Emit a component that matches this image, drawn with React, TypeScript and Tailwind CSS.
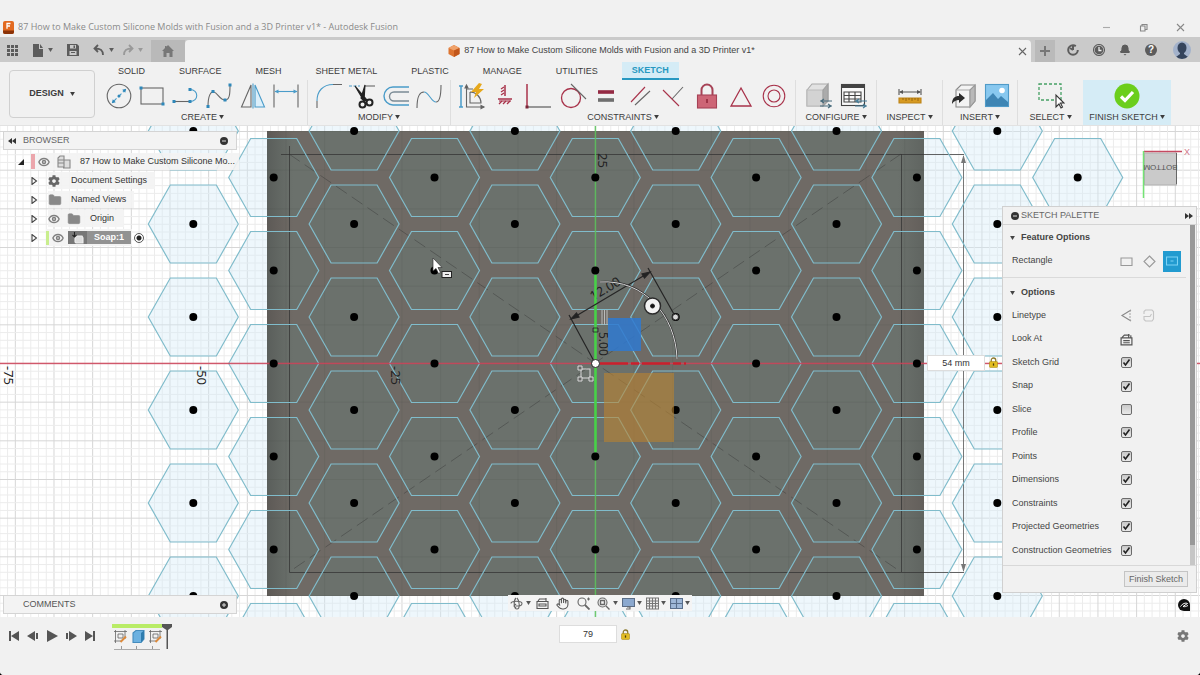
import type { ReactNode } from 'react';
import { Bell, Hand, Eye, Folder } from 'lucide-react';
import { FaCog } from 'react-icons/fa';

const ARIAL = 'font-["Liberation_Sans",Arial,sans-serif]';

const BLUE = '#4a9cc9';
const RED = '#a8324a';
const GRAY = '#666666';

interface GlyphProps {
  children: ReactNode;
  size?: string;
  box?: string;
  className?: string;
}

const Glyph = ({ children, size = 'w-7 h-7', box = '0 0 28 28', className = '' }: GlyphProps) => (
  <svg viewBox={box} className={`${size} ${className} shrink-0`} fill="none" stroke={GRAY} strokeWidth="1.1" aria-hidden="true">
    {children}
  </svg>
);

const Caret = ({ className = '' }: { className?: string }) => (
  <svg viewBox="0 0 6 5" className={`w-[5px] h-1 shrink-0 ${className}`} fill="currentColor" aria-hidden="true">
    <path d="M0 0H6L3 5Z" />
  </svg>
);

const Lock = () => (
  <svg viewBox="0 0 10 12" className="w-[9px] h-[11px] shrink-0" aria-hidden="true">
    <path d="M2.5 6V3.5a2.5 2.5 0 0 1 5 0V6" fill="none" stroke="#8c7a2e" strokeWidth="1.4" />
    <rect x="0.5" y="5" width="9" height="6.5" rx="1" fill="#e3bd22" stroke="#a48412" strokeWidth="0.6" />
    <path d="M5 7v2.5" stroke="#4b3c08" strokeWidth="1.4" />
  </svg>
);

// ---------- ribbon icons ----------

const CircleIcon = () => (
  <Glyph>
    <circle cx="14" cy="14" r="11.8" />
    <path d="M8 20 20 8" stroke={BLUE} strokeDasharray="5 2" />
    <g fill="#2f88ba" stroke="none">
      <path d="M6.800 21.200l1-4 3 3ZM21.200 6.800l-4 1 3 3Z" />
      <circle cx="14" cy="14" r="1.500" />
    </g>
  </Glyph>
);

const RectIcon = () => (
  <Glyph>
    <rect x="3" y="6" width="22" height="16" />
    <g fill="#2f88ba" stroke="none">
      <rect x="1.500" y="4.500" width="3" height="3" />
      <rect x="23.500" y="20.500" width="3" height="3" />
    </g>
  </Glyph>
);

const LineIcon = () => (
  <Glyph>
    <path d="M2 19.500H18" />
    <path d="M18 19.500c9 0 9-12 0-12" stroke={BLUE} />
    <g fill="#2f88ba" stroke="none">
      <rect x="0.500" y="18" width="3" height="3" />
      <rect x="16.500" y="18" width="3" height="3" />
      <rect x="16.500" y="6" width="3" height="3" />
    </g>
  </Glyph>
);

const SplineIcon = () => (
  <Glyph>
    <path d="M3 25C3 13 6 9 9 10c4 1 6 9 12 8 4-1 4-8 4-15" />
    <g fill="#2f88ba" stroke="none">
      <rect x="1.500" y="23" width="3" height="3" />
      <rect x="6.500" y="8" width="3" height="3" />
      <rect x="18.500" y="16.500" width="3" height="3" />
      <rect x="23.500" y="1.500" width="3" height="3" />
    </g>
  </Glyph>
);

const MirrorIcon = () => (
  <Glyph>
    <path d="M12 3V25H2.500Z" />
    <path d="M16 3V25H25.500Z" stroke={BLUE} fill="#dceffa" />
    <path d="M14 1.500V26.500" stroke={BLUE} />
  </Glyph>
);

const DimensionIcon = () => (
  <Glyph>
    <path d="M2 2.500V25.500M26 2.500V25.500" />
    <path d="M3 9.500H25" stroke={BLUE} />
    <path d="M2.500 9.500l4-2v4ZM25.500 9.500l-4-2v4Z" fill={BLUE} stroke="none" />
  </Glyph>
);

const FilletIcon = () => (
  <Glyph>
    <path d="M2 26V19M18 2.500H27" />
    <path d="M2 19C2 9 8 2.500 18 2.500" stroke={BLUE} />
  </Glyph>
);

const TrimIcon = () => (
  <Glyph>
    <path d="M1 4H12" strokeDasharray="3 1.500" stroke={BLUE} />
    <path d="M17 4H27" />
    <path d="M7 4 19 18 16 19ZM17 3 16 19 13 16Z" fill="#222" stroke="#222" />
    <circle cx="14.500" cy="22.500" r="3" stroke="#222" strokeWidth="2" />
    <circle cx="21.500" cy="20.500" r="3" stroke="#222" strokeWidth="2" />
  </Glyph>
);

const OffsetIcon = () => (
  <Glyph>
    <path d="M27 5H11a9 9 0 0 0 0 18H27" stroke={BLUE} strokeWidth="1.400" />
    <path d="M27 10H12a4.500 4.500 0 0 0 0 9H27" stroke="#7b8b95" strokeWidth="1.400" />
  </Glyph>
);

const CurveIcon = () => (
  <Glyph>
    <path d="M2 26C2 13 5 10 9 10" />
    <path d="M9 10c5 0 7 10 12 10" stroke={BLUE} />
    <path d="M21 20c4 0 5-7 5-17" />
  </Glyph>
);

const AutoConstrainIcon = () => (
  <Glyph>
    <path d="M3 4V25M1 4H5M1 25H5" stroke={BLUE} strokeWidth="1.500" />
    <path d="M8.500 3V25H26M8 7h7M12 10v11h11C23 15 18 10 12 10" />
    <path d="M21 1 13 10h5l-2 6 10-9h-5l3-5Z" fill="#e6a81d" stroke="none" />
    <path d="M23 23.500l3 1.500-3 1.500ZM7 6l1.500-3L10 6Z" fill="#555" />
  </Glyph>
);

const HorizVertIcon = () => (
  <Glyph>
    <path d="M14 3V14M7 17H21" stroke={RED} strokeWidth="1.500" />
    <path d="M10 7l3-2M10 10l3-2M10 13l3-2M8 22l3-3M12 22l3-3M16 22l3-3" stroke={RED} strokeWidth="1.300" />
    <path d="M8 19H20" stroke={RED} />
  </Glyph>
);

const CoincidentIcon = () => (
  <Glyph>
    <path d="M2 2V25" stroke={RED} strokeWidth="1.500" />
    <path d="M2 25H26" strokeWidth="1.300" />
    <rect x="0.500" y="23.500" width="3" height="3" fill="#7a2638" stroke="none" />
  </Glyph>
);

const TangentIcon = () => (
  <Glyph>
    <circle cx="12" cy="16" r="9.500" stroke={RED} strokeWidth="1.300" />
    <path d="M12 2 27 17" />
  </Glyph>
);

const EqualIcon = () => (
  <Glyph>
    <path d="M6 10H22" stroke="#942a43" strokeWidth="3.600" />
    <path d="M6 18H22" stroke="#6f6f6f" strokeWidth="3.600" />
  </Glyph>
);

const ParallelIcon = () => (
  <Glyph>
    <path d="M5 20 19 5" stroke={RED} />
    <path d="M9 23 24 9" />
  </Glyph>
);

const PerpendicularIcon = () => (
  <Glyph>
    <path d="M4 8 20 24" stroke={RED} />
    <path d="M13 17 24 5" />
  </Glyph>
);

const FixIcon = () => (
  <Glyph>
    <path d="M8.500 13V8a5.500 5.500 0 0 1 11 0v5" stroke="#a64256" strokeWidth="2" />
    <rect x="4.500" y="13" width="19" height="13" fill="#cd6576" stroke="#a64256" />
    <path d="M14 17v4" stroke="#8c2438" strokeWidth="1.500" />
  </Glyph>
);

const MidpointIcon = () => (
  <Glyph>
    <path d="M14 6 24 24H4Z" stroke={RED} strokeWidth="1.300" />
  </Glyph>
);

const ConcentricIcon = () => (
  <Glyph>
    <circle cx="14" cy="14" r="10.800" stroke={RED} />
    <circle cx="14" cy="14" r="6" stroke={RED} />
  </Glyph>
);

const ConfigureCubeIcon = () => (
  <Glyph>
    <path d="M2 8 7 2H23V19L18 24H2Z" fill="#e2e2e2" stroke="#aaa" />
    <path d="M2 8H18V24H2Z" fill="#d3d3d3" stroke="#bbb" />
    <path d="M18 8l5-6v17l-5 5Z" fill="#ababab" stroke="#a0a0a0" />
    <path d="M15 19H27M15 24H27M19 17l-3 2 3 2M23 22l3 2-3 2" stroke="#476b7c" />
  </Glyph>
);

const ConfigureTableIcon = () => (
  <Glyph>
    <rect x="2.500" y="2.500" width="23" height="21" fill="#fafafa" stroke="#444" />
    <path d="M2 2H26V6H2Z" fill="#444" stroke="none" />
    <path d="M5 10H22V20H5ZM5 13.500H22M5 17H22M10 10V20M16 10V20" stroke="#444" />
    <path d="M16 19H28M16 24H28M20 17l-3 2 3 2M24 22l3 2-3 2" stroke="#477d98" />
  </Glyph>
);

const MeasureIcon = () => (
  <Glyph>
    <path d="M3 7V13M25 7V13M4 10H24" stroke="#555" />
    <path d="M3 10l4-2v4ZM25 10l-4-2v4Z" fill="#555" stroke="none" />
    <path d="M3 16H25V21H3Z" fill="#d79a22" stroke="#bd8418" />
    <path d="M7 16v2M10 16v3M13 16v2M16 16v3M19 16v2M22 16v3" stroke="#8a5c0a" strokeWidth="0.800" />
  </Glyph>
);

const InsertDeriveIcon = () => (
  <Glyph>
    <path d="M6 8 11 3H25V19L20 25H6Z" fill="#f3f3f3" stroke="#888" />
    <path d="M6 8H20V25" stroke="#aaa" />
    <path d="M20 8l5-5v16l-5 6Z" fill="#b9b9b9" stroke="#999" />
    <path d="M2 22c0-6 3-8 7-8v-3l6 5-6 5v-3c-3 0-5 1-7 4Z" fill="#2b2b2b" stroke="none" />
  </Glyph>
);

const CanvasImageIcon = () => (
  <Glyph>
    <rect x="2.500" y="2.500" width="23" height="22" fill="#88c8ef" stroke="#509bc8" />
    <circle cx="19" cy="8.500" r="2.800" fill="#fff" stroke="none" />
    <path d="M3 18 10 11l5 6 3-3 7 6v4H3Z" fill="#3e85b4" stroke="none" />
  </Glyph>
);

const SelectIcon = () => (
  <Glyph>
    <rect x="2" y="2" width="22" height="16" stroke="#46a064" strokeDasharray="3 2" strokeWidth="1.300" />
    <path d="M19 13V25l3-3 2 4 1.500-1-2-4H27Z" fill="#fff" stroke="#333" />
  </Glyph>
);

const FinishIcon = () => (
  <Glyph>
    <circle cx="14" cy="14" r="12.500" fill="#6bce1c" stroke="none" />
    <path d="M8 14.500 12 18.500 20 10" stroke="#fff" strokeWidth="3.200" />
  </Glyph>
);

interface RibbonGroupProps {
  label: string;
  width: string;
  cols: string;
  icons: [string, ReactNode][];
  finish?: boolean;
}

const GROUPS: RibbonGroupProps[] = [
  {
    label: 'CREATE', width: 'w-[210px] px-1', cols: 'grid-cols-6',
    icons: [['Circle', <CircleIcon />], ['Rectangle', <RectIcon />], ['Line', <LineIcon />], ['Spline', <SplineIcon />], ['Mirror', <MirrorIcon />], ['Dimension', <DimensionIcon />]],
  },
  {
    label: 'MODIFY', width: 'w-[143px] px-1', cols: 'grid-cols-4',
    icons: [['Fillet', <FilletIcon />], ['Trim', <TrimIcon />], ['Offset', <OffsetIcon />], ['Curve', <CurveIcon />]],
  },
  {
    label: 'CONSTRAINTS', width: 'w-[345px] px-1', cols: 'grid-cols-10',
    icons: [
      ['Auto constrain', <AutoConstrainIcon />], ['Horizontal/Vertical', <HorizVertIcon />], ['Coincident', <CoincidentIcon />],
      ['Tangent', <TangentIcon />], ['Equal', <EqualIcon />], ['Parallel', <ParallelIcon />], ['Perpendicular', <PerpendicularIcon />],
      ['Fix', <FixIcon />], ['Midpoint', <MidpointIcon />], ['Concentric', <ConcentricIcon />],
    ],
  },
  { label: 'CONFIGURE', width: 'w-[81px] px-1.5', cols: 'grid-cols-2', icons: [['Configure', <ConfigureCubeIcon />], ['Table', <ConfigureTableIcon />]] },
  { label: 'INSPECT', width: 'w-[66px]', cols: 'grid-cols-1', icons: [['Measure', <MeasureIcon />]] },
  { label: 'INSERT', width: 'w-[75px] px-1', cols: 'grid-cols-2', icons: [['Derive', <InsertDeriveIcon />], ['Canvas', <CanvasImageIcon />]] },
  { label: 'SELECT', width: 'w-[65px]', cols: 'grid-cols-1', icons: [['Select', <SelectIcon />]] },
  { label: 'FINISH SKETCH', width: 'w-[88px]', cols: 'grid-cols-1', icons: [['Finish', <FinishIcon />]], finish: true },
];

const RibbonGroup = ({ label, width, cols, icons, finish }: RibbonGroupProps) => (
  <div className={`${width} shrink-0 flex flex-col ${finish ? 'bg-[#d5ecf6]' : label === 'SELECT' ? '' : 'border-r border-[#dedede]'}`}>
    <div className={`grid ${cols} h-[31px] place-items-center`}>
      {icons.map(([name, icon]) => (
        <button key={name} aria-label={name} className="w-7 h-7">{icon}</button>
      ))}
    </div>
    <button className="flex items-center justify-center gap-0.5 h-3 whitespace-nowrap leading-3">
      {label} <Caret />
    </button>
  </div>
);

const TABS = ['SOLID', 'SURFACE', 'MESH', 'SHEET METAL', 'PLASTIC', 'MANAGE', 'UTILITIES', 'SKETCH'];

const Ribbon = () => (
  <div className="flex h-16 bg-[#f1f1f1] border-b border-[#e2e2e2] text-[9px] text-[#3c3c3c]">
    <button className="ml-[9px] mr-[3px] mt-2 w-[86px] h-12 shrink-0 flex items-center justify-center gap-1.5 rounded-sm border border-[#d0d0d0] font-bold">
      DESIGN <Caret />
    </button>
    <div className="flex flex-col">
      <div className="flex h-[18px] gap-3.5 pl-2.5">
        {TABS.map((tab) => (
          <button
            key={tab}
            className={`px-2.5 whitespace-nowrap leading-4 ${
              tab === 'SKETCH' ? 'bg-[#d5ecf6] border-b-2 border-[#2798c1] text-[#2798c1] font-bold' : ''
            }`}
          >
            {tab}
          </button>
        ))}
      </div>
      <div className="flex flex-1 items-stretch">
        {GROUPS.map((group) => (
          <RibbonGroup key={group.label} {...group} />
        ))}
      </div>
    </div>
  </div>
);

// ---------- window chrome ----------

const FusionLogo = () => (
  <svg viewBox="0 0 11 13" className="w-[11px] h-[13px]" aria-hidden="true">
    <rect width="11" height="13" rx="2" fill="#e2691f" />
    <path d="M0 9.500H11V11a2 2 0 0 1-2 2H2a2 2 0 0 1-2-2Z" fill="#8a3208" />
    <path d="M4 7.800V2.500H7.500M4 5H7" stroke="#fff" strokeWidth="1.300" fill="none" />
  </svg>
);

const TitleBar = () => (
  <div className="flex h-[37px] items-end justify-between bg-[#f1f1f1] pb-0.5 pl-[3px] pr-[15px] text-[#8a8a8a]">
    <div className="flex h-4 items-center gap-1">
      <FusionLogo />
      <span className='font-["Open_Sans","Noto_Sans",sans-serif] text-[9px] leading-4 whitespace-nowrap'>
        87 How to Make Custom Silicone Molds with Fusion and a 3D Printer v1* - Autodesk Fusion
      </span>
    </div>
    <div className="flex h-4 items-center gap-7">
      <button aria-label="Minimize"><Glyph size="w-[9px] h-[9px]" box="0 0 9 9"><path d="M1 4.500H8" stroke="#aaa" /></Glyph></button>
      <button aria-label="Restore"><Glyph size="w-[9px] h-[9px]" box="0 0 9 9"><path d="M1.500 3H6V8H1.500ZM3 3V1.500H8V6.500H6" stroke="#888" /></Glyph></button>
      <button aria-label="Close"><Glyph size="w-[9px] h-[9px]" box="0 0 9 9"><path d="M1 1 8 8M8 1 1 8" stroke="#888" /></Glyph></button>
    </div>
  </div>
);

const TabStrip = () => (
  <div className="flex h-[25px] bg-[#cacaca] text-[#5c5c5c]">
    <div className="flex w-[151px] shrink-0 items-center pl-[7px] pt-px">
      <button aria-label="Apps">
        <svg viewBox="0 0 11 11" className="w-[11px] h-[11px]" fill="currentColor">
          <path d="M0 0h3v3H0zM4 0h3v3H4zM8 0h3v3H8zM0 4h3v3H0zM4 4h3v3H4zM8 4h3v3H8zM0 8h3v3H0zM4 8h3v3H4zM8 8h3v3H8z" />
        </svg>
      </button>
      <button aria-label="File" className="ml-3.5 flex items-center gap-1">
        <svg viewBox="0 0 12 13" className="w-3 h-[13px]" fill="currentColor"><path d="M1 0H7V5H11V13H1ZM8 0l3 4H8Z" /></svg>
        <Caret />
      </button>
      <button aria-label="Save" className="ml-3.5">
        <svg viewBox="0 0 12 12" className="w-3 h-3" fill="currentColor"><path fillRule="evenodd" d="M0 0H10L12 2V12H0ZM3 1V4.500H9V1ZM2.500 7V11H9.500V7ZM6.500 1.500H8V4H6.500Z" /><path d="M4 8h4v1H4z" /></svg>
      </button>
      <button aria-label="Undo" className="ml-3.5 flex items-center gap-1">
        <svg viewBox="0 0 12 12" className="w-3 h-3" fill="none" stroke="currentColor" strokeWidth="1.800"><path d="M5 1 1.500 4.500 5 8M2 4.500c5 0 8 1 8 6.500" /></svg>
        <Caret />
      </button>
      <button aria-label="Redo" className="ml-2 flex items-center gap-1 text-[#999]">
        <svg viewBox="0 0 12 12" className="w-3 h-3" fill="none" stroke="currentColor" strokeWidth="1.800"><path d="M7 1l3.500 3.500L7 8M10 4.500c-5 0-8 1-8 6.500" /></svg>
        <Caret />
      </button>
    </div>
    <button aria-label="Home" className="mt-[3px] flex w-[34px] shrink-0 items-center justify-center bg-[#b9b9b9]">
      <svg viewBox="0 0 12 12" className="w-3 h-3" fill="#777"><path d="M6 0l6 6h-1.500v6H7.500V8h-3v4H1.500V6H0L3 3V1h1.500v.7Z" /></svg>
    </button>
    <div className="mt-[3px] flex min-w-0 flex-1 items-center rounded-t bg-[#f1f1f1] pr-1">
      <div className="flex flex-1 items-center justify-center gap-1 text-[9px] text-[#444] whitespace-nowrap">
        <svg viewBox="0 0 12 12" className="w-3 h-3" aria-hidden="true">
          <path d="M6 0l5.500 3v6L6 12 .5 9V3Z" fill="#dd7430" />
          <path d="M.5 3 6 0l5.500 3L6 5.500Z" fill="#f0a26a" />
          <path d="M6 5.500 11.500 3v6L6 12Z" fill="#c2571b" />
        </svg>
        87 How to Make Custom Silicone Molds with Fusion and a 3D Printer v1*
      </div>
      <button aria-label="Close document"><Glyph size="w-[9px] h-[9px]" box="0 0 9 9"><path d="M1 1 8 8M8 1 1 8" /></Glyph></button>
    </div>
    <div className="flex w-[169px] shrink-0 items-center gap-3.5 pl-1 pt-px">
      <button aria-label="New tab" className="-mr-0.5 flex h-[22px] w-5 items-center justify-center self-end bg-[#bababa]">
        <Glyph size="w-2.5 h-2.5" box="0 0 10 10"><path d="M5 0V10M0 5H10" strokeWidth="2" stroke="#777" /></Glyph>
      </button>
      <button aria-label="Extensions">
        <Glyph size="w-3 h-3" box="0 0 12 12"><circle cx="6" cy="6" r="4.800" strokeWidth="2" strokeDasharray="25 5" stroke="#5c5c5c" /><path d="M6 6V1M6 6 3 4" strokeWidth="2" stroke="#5c5c5c" /></Glyph>
      </button>
      <button aria-label="Job status">
        <Glyph size="w-3 h-3" box="0 0 12 12"><circle cx="6" cy="6" r="5.500" stroke="#5c5c5c" /><circle cx="6" cy="6" r="4.300" fill="#5c5c5c" stroke="none" /><path d="M6 3V6.500H8.500" stroke="#eee" strokeWidth="1.300" /></Glyph>
      </button>
      <button aria-label="Notifications"><Bell className="w-3 h-3" fill="currentColor" /></button>
      <button aria-label="Help" className="flex h-3 w-3 items-center justify-center rounded-full bg-[#5c5c5c] text-[10px] font-bold leading-3 text-white">?</button>
      <button aria-label="Account" className="ml-0.5 flex h-[18px] w-[18px] items-end justify-center overflow-hidden rounded-full bg-[#a3b2cb]">
        <svg viewBox="0 0 18 18" className="h-[18px] w-[18px]" fill="#35445c"><ellipse cx="9" cy="7" rx="4.500" ry="5.500" /><path d="M7 10h4v3l4 3v2H3v-2l4-3Z" /></svg>
      </button>
    </div>
  </div>
);

// ---------- sketch canvas ----------

const CX = 595.3;
const CY = 363.5;
const HEX = '-45,0 -23,-39 23,-39 45,0 23,39 -23,39';

const hexes: { x: number; y: number }[] = [];
for (let k = -5; k <= 6; k++) {
  for (let j = -3; j <= 3; j++) {
    if (k === 6 && Math.abs(j) === 3) continue;
    const y = CY + (k % 2 === 0 ? j * 93 : j * 93 + 46.5);
    hexes.push({ x: CX + k * 80.4, y });
  }
}

const Gridlines = () => {
  const lines = [];
  for (let i = -79; i <= 79; i++) {
    const color = i % 5 === 0 ? '#d6d6d6' : '#ececec';
    const x = CX + i * 7.733;
    const y = CY + i * 7.733;
    lines.push(<path key={`v${i}`} d={`M${x} 126V617`} stroke={color} />);
    if (y > 126 && y < 617) lines.push(<path key={`h${i}`} d={`M0 ${y}H1200`} stroke={color} />);
  }
  return <g strokeWidth="1">{lines}</g>;
};

const SketchDrawing = () => (
  <svg viewBox="0 126 1200 491" preserveAspectRatio="xMidYMid slice" className="h-full w-full bg-white">
    <defs>
      <linearGradient id="edge" x1="0" x2="1" y1="0" y2="0">
        <stop offset="0" stopColor="#333" stopOpacity="0.3" />
        <stop offset="0.04" stopColor="#333" stopOpacity="0" />
        <stop offset="0.96" stopColor="#333" stopOpacity="0" />
        <stop offset="1" stopColor="#333" stopOpacity="0.2" />
      </linearGradient>
      <clipPath id="body"><rect x="267" y="131" width="657" height="465" /></clipPath>
    </defs>
    <Gridlines />
    {hexes.map(({ x, y }) => (
      <polygon key={`f${x},${y}`} points={HEX} transform={`translate(${x} ${y})`} fill="#d4ebf7" fillOpacity="0.4" />
    ))}

    {/* soap body */}
    <rect x="267" y="131" width="657" height="465" fill="#6f6a65" />
    <g clipPath="url(#body)">
      {hexes.map(({ x, y }) => (
        <polygon key={`b${x},${y}`} points={HEX} transform={`translate(${x} ${y})`} fill="#6b716c" />
      ))}
      <g stroke="#4c504d" strokeOpacity="0.15">
        {[-8, -7, -6, -5, -4, -3, -2, -1, 1, 2, 3, 4, 5, 6, 7, 8].map((i) => (
          <path key={i} d={`M${CX + i * 38.67} 131V596M267 ${CY + i * 38.67}H924`} />
        ))}
      </g>
    </g>
    <rect x="267" y="131" width="657" height="465" fill="url(#edge)" />

    {/* construction frame */}
    <g stroke="#333" fill="none">
      <path d="M281 154.500H964M289.500 146V572.500H964M901.500 154V572" strokeOpacity="0.75" />
      <path d="M289 154 901 572M901 154 289 572" strokeDasharray="13 6" strokeOpacity="0.4" />
      <path d="M963.500 156V571" stroke="#777" />
      <path d="M963.500 155l-2.500 8h5ZM963.500 572l-2.500-8h5Z" fill="#777" stroke="none" />
    </g>

    {hexes.map(({ x, y }) => (
      <g key={`l${x},${y}`} transform={`translate(${x} ${y})`}>
        <polygon points={HEX} fill="none" stroke="#80bccb" strokeWidth="1.200" />
      </g>
    ))}

    {/* axes */}
    <rect x="0" y="362.700" width="1200" height="1.500" fill="#cf4258" fillOpacity="0.85" />
    <rect x="594.700" y="126" width="1.500" height="491" fill="#5cc45c" fillOpacity="0.85" />

    {hexes.map(({ x, y }) => (
      <circle key={`c${x},${y}`} cx={x} cy={y} r="4" fill="#000" />
    ))}

    {/* grid values */}
    <g fill="#222" fontFamily="Noto Sans, sans-serif" fontSize="13">
      <text transform="translate(4 366) rotate(90)">-75</text>
      <text transform="translate(197 366) rotate(90)">-50</text>
      <text transform="translate(391 366) rotate(90)">-25</text>
      <text transform="translate(598 153) rotate(90)">25</text>
      <text transform="translate(599 332) rotate(90)" fontSize="12">5.00</text>
      <text transform="translate(593 301) rotate(-30)" fontSize="13">12.00</text>
    </g>

    {/* origin manipulator */}
    <rect x="608" y="318" width="33" height="33" fill="#2f79d0" fillOpacity="0.850" />
    <rect x="604" y="373" width="70" height="69" fill="#ba8430" fillOpacity="0.600" />
    <path d="M595.500 275V452" stroke="#47d247" strokeWidth="2.500" />
    <path d="M600 363.500H686" stroke="#c9202d" strokeWidth="2.500" strokeDasharray="28 3 8 3" />
    <g fill="none" stroke="#252525" strokeWidth="1.200">
      <path d="M595 363 569 315M648 268 675 316M571 319 650 272" />
      <path d="M571 319l8-2-2.500-4ZM650 272l-8 2 2.500 4Z" fill="#222" />
      <path d="M602 310V325M604.500 310V325M607 310V325" stroke="#bbb" strokeWidth="1" />
      <path d="M600 282c44-3 76 34 77 77" stroke="#333" strokeWidth="2" />
      <path d="M600 282c44-3 76 34 77 77" stroke="#d8d8d8" strokeWidth="1" />
      <path d="M593 328h5v4h-5Z" strokeWidth="0.800" />
    </g>
    <g stroke="#2b2b2b">
      <circle cx="652.500" cy="306" r="8" fill="#f2f2f2" strokeWidth="1.500" />
      <circle cx="652.500" cy="306" r="2" fill="#111" />
      <circle cx="675.500" cy="317" r="3" fill="#d9d9d9" />
      <circle cx="595.500" cy="363.500" r="4" fill="#fff" />
    </g>
    <g fill="none" stroke="#d9d9d9">
      <rect x="581" y="369" width="9" height="9" />
      <path d="M578 366h4v4h-4ZM578 377h4v4h-4ZM589 377h4v4h-4Z" fill="#666" />
    </g>

    {/* mouse pointer */}
    <path d="M433 258V271l3-2.500 2.500 5 2-1-2.500-5h4Z" fill="#fff" stroke="#333" strokeWidth="0.700" />
    <rect x="442" y="271.500" width="9.500" height="6" fill="#eee" stroke="#222" />
    <path d="M445 274.500h4" stroke="#444" />
  </svg>
);

const ViewCube = () => (
  <svg viewBox="0 0 56 56" className="absolute right-1 top-5 h-14 w-14" aria-label="View cube">
    <rect x="4.500" y="7" width="32" height="32" fill="#cacaca" stroke="#b0b0b0" />
    <path d="M36.500 7V38" stroke="#666" />
    <path d="M4 5.500H42" stroke="#c54a61" strokeWidth="1.500" />
    <path d="M3.500 5V52" stroke="#74e474" strokeWidth="1.500" />
    <text x="20.500" y="24.500" transform="rotate(180 20.500 21.500)" textAnchor="middle" fontFamily="Liberation Sans" fontSize="8" fill="#555">BOTTOM</text>
    <text x="44" y="9" fontFamily="Liberation Sans" fontSize="9" fill="#d0798a">X</text>
  </svg>
);

const Disclosure = ({ open }: { open?: boolean }) => (
  <Glyph size="w-2 h-2" box="0 0 8 8">
    {open ? <path d="M7 1V7H1Z" fill="#222" stroke="none" /> : <path d="M2 .5V7.500L6.500 4Z" stroke="#444" />}
  </Glyph>
);

const EyeIcon = () => <Eye className="w-3 h-3 shrink-0 text-[#808080]" strokeWidth={3} />;
const FolderIcon = () => <Folder className="w-3.5 h-3.5 shrink-0 text-[#888]" fill="#888" strokeWidth={1} />;

const Dot = ({ plus }: { plus?: boolean }) => (
  <svg viewBox="0 0 8 8" className="w-2 h-2 shrink-0" aria-hidden="true">
    <circle cx="4" cy="4" r="4" fill="#333" />
    <path d={plus ? 'M4 2V6M2 4H6' : 'M2 4H6'} stroke="#ddd" />
  </svg>
);

const BrowserPanel = () => (
  <aside className="absolute left-[3px] top-[5px] w-[234px] text-[9px] text-[#333]">
    <header className="flex h-[19px] items-center border border-[#d4d4d4] bg-[#f3f3f3] pl-1 pr-2 text-[#666]">
      <svg viewBox="0 0 8 6" className="w-2 h-1.5" fill="#333"><path d="M4 0V6L0 3ZM8 0V6L4 3Z" /></svg>
      <span className="ml-[7px] flex-1">BROWSER</span>
      <button aria-label="Collapse browser"><Dot /></button>
    </header>
    <ul className="mt-0.5">
      <li className="flex h-[19px] items-center pl-3.5">
        <Disclosure open />
        <div className="ml-1.5 flex h-[17px] items-center whitespace-nowrap bg-[#f3f3f3]/90 pr-1">
          <span className="mr-[3px] h-[15px] w-1 bg-[#eba5ab]" />
          <EyeIcon />
          <Glyph size="w-3.5 h-3.5" box="0 0 14 14" className="ml-[7px] mr-[9px]"><path d="M1 3 3 1H7V12H1ZM1 5H7M1 8H7M7 5h6v8H6" fill="#ddd" stroke="#888" /></Glyph>
          87 How to Make Custom Silicone Mo...
        </div>
      </li>
      <li className="flex h-[19px] items-center pl-[27px]">
        <Disclosure />
        <div className="ml-2.5 flex h-[17px] items-center bg-[#f3f3f3]/90 pr-2">
          <FaCog className="mr-[11px] w-3 h-3 text-[#666]" />
          Document Settings
        </div>
      </li>
      <li className="flex h-[19px] items-center pl-[27px]">
        <Disclosure />
        <div className="ml-2.5 flex h-[17px] items-center gap-[9px] bg-[#f3f3f3]/90 pr-2">
          <FolderIcon />
          Named Views
        </div>
      </li>
      <li className="flex h-[19px] items-center pl-[27px]">
        <Disclosure />
        <div className="ml-2.5 flex h-[17px] items-center bg-[#f3f3f3]/90 pr-2.5">
          <EyeIcon />
          <span className="ml-[7px] mr-[9px]"><FolderIcon /></span>
          Origin
        </div>
      </li>
      <li className="flex h-[19px] items-center pl-[27px]">
        <Disclosure />
        <div className="ml-2 flex h-[17px] items-center bg-[#f3f3f3]/90 pr-px">
          <span className="mr-[3px] h-3.5 w-[3px] bg-[#c9ee8e]" />
          <EyeIcon />
          <div className="ml-1 flex h-[13px] items-center bg-[#929292] font-bold text-white">
            <span className="flex h-full w-[19px] items-center justify-center bg-[#777]">
              <Glyph size="w-3 h-3" box="0 0 12 12"><path d="M3 4H10L11 6V11H4L3 10Z" fill="#ddd" stroke="#eee" /><path d="M2.500 0v5M.5 3l2 2 2-2" stroke="#222" /></Glyph>
            </span>
            <span className="px-[7px]">Soap:1</span>
          </div>
        </div>
        <input type="radio" defaultChecked aria-label="Activate Soap:1" className="ml-0.5 h-2.5 w-2.5 appearance-none rounded-full border border-[#555] bg-white bg-[radial-gradient(#222_0_2px,transparent_3px)]" />
      </li>
    </ul>
  </aside>
);

interface OptionRowProps {
  label: string;
  checked: boolean;
}

const OptionRow = ({ label, checked }: OptionRowProps) => (
  <label className="flex items-center">
    <span className="w-[109px] whitespace-nowrap">{label}</span>
    <span className="relative h-[11px] w-[11px]">
      <input type="checkbox" defaultChecked={checked} className="peer block h-[11px] w-[11px] appearance-none rounded-[2px] border border-[#6b6b6b] bg-linear-to-b from-[#c9c9c9] to-[#e9e9e9]" />
      <svg viewBox="0 0 11 11" className="pointer-events-none absolute inset-0 hidden peer-checked:block" fill="none" stroke="#222" strokeWidth="1.600">
        <path d="M2.500 5.500 4.500 8 8.500 2.500" />
      </svg>
    </span>
  </label>
);

const OPTIONS: OptionRowProps[] = [
  { label: 'Sketch Grid', checked: true },
  { label: 'Snap', checked: true },
  { label: 'Slice', checked: false },
  { label: 'Profile', checked: true },
  { label: 'Points', checked: true },
  { label: 'Dimensions', checked: true },
  { label: 'Constraints', checked: true },
  { label: 'Projected Geometries', checked: true },
  { label: 'Construction Geometries', checked: true },
];

const SketchPalette = () => (
  <aside className="absolute right-[3px] top-20 w-[195px] border border-[#d0d0d0] bg-[#f1f1f1] text-[9px] text-[#444]">
    <header className="flex h-[18px] items-center border-b border-[#d4d4d4] pl-2 pr-[3px] text-[#666]">
      <Dot />
      <span className="ml-0.5 flex-1">SKETCH PALETTE</span>
      <svg viewBox="0 0 8 6" className="w-2 h-1.5" fill="#333"><path d="M0 0V6L4 3ZM4 0V6L8 3Z" /></svg>
    </header>
    <div className="flex">
      <div className="flex-1 pt-px">
        <div className="border-b border-[#dadada] pb-[5px]">
          <h3 className="flex h-6 items-center gap-1.5 pl-[7px] font-bold"><Caret /> Feature Options</h3>
          <div className="flex h-[22px] items-center pl-[9px]">
            <span className="w-[108px]">Rectangle</span>
            <button aria-label="2-point rectangle"><Glyph size="w-[13px] h-[13px]" box="0 0 13 13"><path d="M1 3H12V10.500H1Z" stroke="#999" /></Glyph></button>
            <button aria-label="3-point rectangle" className="ml-2.5"><Glyph size="w-[13px] h-[13px]" box="0 0 13 13"><path d="M6.500 1 12 6.500 6.500 12 1 6.500Z" stroke="#999" /></Glyph></button>
            <button aria-label="Center rectangle" className="ml-[7px] flex h-[21px] w-[18px] items-center justify-center bg-[#229bd0]">
              <Glyph size="w-3 h-3" box="0 0 12 12"><path d="M.5 2H11.500V10H.5ZM4.500 6h3" stroke="#7cd3f5" /></Glyph>
            </button>
          </div>
        </div>
        <h3 className="flex h-[26px] items-center gap-1.5 pl-[7px] pt-1 font-bold"><Caret /> Options</h3>
        <div className="grid h-[261px] auto-rows-fr pb-[3px] pl-[9px]">
          <div className="flex items-center">
            <span className="w-[108px]">Linetype</span>
            <button aria-label="Construction"><Glyph size="w-[13px] h-[13px]" box="0 0 13 13"><path d="M11 1 2 6.500 11 12" stroke="#888" /><path d="M10 1V12" stroke="#aaa" strokeDasharray="2 1" /></Glyph></button>
            <button aria-label="Centerline" className="ml-[9px]"><Glyph size="w-[13px] h-[13px]" box="0 0 13 13"><path d="M2 5V2.500L3.500 1H10l1.500 1.500V10L10 12H3.500L2 10.500V7.500H8L9.500 5" stroke="#c4c4c4" /></Glyph></button>
          </div>
          <div className="flex items-center">
            <span className="w-[108px]">Look At</span>
            <button aria-label="Look At"><Glyph size="w-[13px] h-[13px]" box="0 0 12 12"><path d="M1 4.500H11V11H1ZM2 4 4 2H9M3 7H9M3 9H9M8 1v3M10 2v2" stroke="#555" /></Glyph></button>
          </div>
          {OPTIONS.map((option) => (
            <OptionRow key={option.label} {...option} />
          ))}
        </div>
      </div>
      <div className="ml-1 w-[5px] bg-[#c6c6c6]"><div className="h-[320px] bg-[#999]" /></div>
      <div className="w-px" />
    </div>
    <footer className="flex h-[27px] items-center justify-end border-t border-[#d8d8d8] pr-2">
      <button className="h-4 w-16 whitespace-nowrap border border-[#c4c4c4] bg-[#ebebeb] leading-[13px] text-[#666]">Finish Sketch</button>
    </footer>
  </aside>
);

const NavBar = () => (
  <nav className="absolute bottom-1.5 left-[calc(50%-92px)] flex h-4 w-[184px] items-center bg-[#f4f4f4] pl-0.5 text-[#555]">
    <button aria-label="Orbit" className="flex items-center gap-[3px]">
      <Glyph size="w-[13px] h-[13px]" box="0 0 13 13"><path d="M1 6.500c0-3 11-3 11 0S8 9 6 9M6 1c-3 3-2 11 1 11s3-8 0-11M6 7l-2 2 2 2" /></Glyph>
      <Caret />
    </button>
    <button aria-label="Look at" className="ml-[5px]"><Glyph size="w-[13px] h-[13px]" box="0 0 13 13"><path d="M1 4.500H12V11.500H1ZM2 4 3.500 2H10M3 7H10V9H3ZM10 1V4" stroke="#555" /></Glyph></button>
    <button aria-label="Pan" className="ml-[7px]"><Hand className="w-[13px] h-[13px]" /></button>
    <button aria-label="Zoom" className="ml-2">
      <Glyph size="w-[13px] h-[13px]" box="0 0 13 13"><circle cx="5" cy="5" r="4" /><path d="M8 8l4.500 4.500" strokeWidth="1.800" /><path d="M10 2h3M11.500 .5v3" /></Glyph>
    </button>
    <button aria-label="Fit" className="ml-[7px] flex items-center gap-[3px]">
      <Glyph size="w-[13px] h-[13px]" box="0 0 13 13"><circle cx="5.500" cy="5.500" r="4.500" /><path d="M3.500 3.500h4v4h-4ZM9 9l3.500 3.500" strokeWidth="1.400" /></Glyph>
      <Caret />
    </button>
    <button aria-label="Display settings" className="ml-1 flex items-center gap-0.5">
      <Glyph size="w-[13px] h-[13px]" box="0 0 13 13"><path d="M.5 1.500H12.500V9.500H.5Z" fill="#8ca9cf" stroke="#5b6d86" /><path d="M5 10h3v2H4" /></Glyph>
      <Caret />
    </button>
    <button aria-label="Grid and snaps" className="ml-1 flex items-center gap-0.5">
      <Glyph size="w-[13px] h-[13px]" box="0 0 13 13"><path d="M.5 1H12.500V12H.5ZM.5 4H12.500M.5 6.500H12.500M.5 9H12.500M3.500 1V12M6.500 1V12M9.500 1V12" stroke="#777" /></Glyph>
      <Caret />
    </button>
    <button aria-label="Viewports" className="ml-1 flex items-center gap-0.5">
      <Glyph size="w-[13px] h-[13px]" box="0 0 13 13"><path d="M.5 1.500H12.500V11.500H.5ZM6.500 1.500V11.500M.5 6.500H12.500" fill="#9fb8d8" stroke="#5a6f8c" /></Glyph>
      <Caret />
    </button>
  </nav>
);

const CommentsBar = () => (
  <div className="absolute bottom-[3px] left-[3px] flex h-[19px] w-[234px] items-center border border-[#d4d4d4] bg-[#f3f3f3] pl-[19px] pr-2 text-[9px] text-[#555]">
    <span className="flex-1">COMMENTS</span>
    <button aria-label="Add comment"><Dot plus /></button>
  </div>
);

const Workspace = () => (
  <main className="relative min-h-0 flex-1 overflow-hidden">
    <div className="absolute inset-0"><SketchDrawing /></div>
    <div className="absolute left-[calc(50%+327px)] top-[calc(50%-17px)] flex items-center gap-1">
      <input aria-label="Height" defaultValue="54 mm" className="h-4 w-[58px] border border-[#ddd] bg-white text-center text-[9px] text-[#333]" />
      <Lock />
    </div>
    <ViewCube />
    <BrowserPanel />
    <SketchPalette />
    <CommentsBar />
    <NavBar />
    <button aria-label="Assistant" className="absolute bottom-1.5 right-2.5">
      <svg viewBox="0 0 12 12" className="w-3 h-3"><path d="M6 0a6 6 0 0 1 6 6v6H6A6 6 0 0 1 6 0Z" fill="#111" /><path d="M2.500 7.500c2-3 5-4 7-3L5 7.500c2 .5 3 0 5-1" stroke="#fff" fill="none" /></svg>
    </button>
  </main>
);

// ---------- timeline ----------

const PLAYBACK: [string, string][] = [
  ['Go to start', 'M1 1H3V11H1ZM11 1V11L3 6Z'],
  ['Step back', 'M8 1V11L0 6ZM9 3h2v6H9Z'],
  ['Play', 'M1 0 12 6 1 12Z'],
  ['Step forward', 'M4 1 12 6 4 11ZM1 3h2v6H1Z'],
  ['Go to end', 'M1 1 9 6 1 11ZM9 1h2V11H9Z'],
];

const SketchFeature = () => (
  <Glyph size="w-[13px] h-[13px]" box="0 0 13 13">
    <path d="M1.500 0V13M11 0V9M0 1.500H13M0 11H8M4 4H9V8H4Z" strokeWidth="0.800" />
    <path d="M6.500 12 12 6.500" stroke="#dc8a3b" strokeWidth="2" />
  </Glyph>
);

const Timeline = () => (
  <footer className="grid h-[58px] shrink-0 grid-cols-[1fr_82px_1fr] items-start bg-[#f1f1f1] text-[#555]">
    <div className="flex items-start">
      <div className="flex gap-[7px] pl-2 pt-[13px]">
        {PLAYBACK.map(([name, d]) => (
          <button key={name} aria-label={name}>
            <svg viewBox="0 0 12 12" className="w-3 h-3" fill="currentColor"><path d={d} /></svg>
          </button>
        ))}
      </div>
      <div className="ml-4 mt-[7px] flex">
        <div className="w-[50px] border-t-4 border-[#b9ec66]">
          <div className="flex justify-between pb-1.5 pl-0.5 pt-0.5">
            <SketchFeature />
            <Glyph size="w-[13px] h-[13px]" box="0 0 13 13">
              <path d="M1 3 4 .5H12V9L9 12.500H1Z" fill="#6cb1e0" stroke="#458cbd" />
              <path d="M9 3 12 .5V9L9 12.500Z" fill="#2e7cae" stroke="none" />
            </Glyph>
            <SketchFeature />
          </div>
          <div className="mx-0.5 flex h-px justify-around bg-[#aaa]">
            <span className="-mt-[3px] h-[3px] w-px bg-[#999]" />
            <span className="-mt-[3px] h-[3px] w-px bg-[#999]" />
            <span className="-mt-[3px] h-[3px] w-px bg-[#999]" />
          </div>
        </div>
        <svg viewBox="0 0 10 26" className="h-[26px] w-2.5" fill="#555"><path d="M0 0H10V3L6 6V25H4.500V6L0 3Z" /></svg>
      </div>
    </div>
    <div className="flex items-center gap-1 pt-2">
      <input aria-label="Width" defaultValue="79" className="h-[18px] w-[58px] border border-[#ddd] bg-white text-center text-[9px] text-[#333]" />
      <Lock />
    </div>
    <div className="flex justify-end pr-[11px] pt-[13px]">
      <button aria-label="Settings"><FaCog className="w-3 h-3 text-[#777]" /></button>
    </div>
  </footer>
);

export default function App() {
  return (
    <div className="bg-black">
      <div className={`${ARIAL} flex h-screen min-h-[600px] flex-col overflow-hidden rounded-b bg-[#f1f1f1]`}>
        <TitleBar />
        <TabStrip />
        <Ribbon />
        <Workspace />
        <Timeline />
      </div>
    </div>
  );
}
